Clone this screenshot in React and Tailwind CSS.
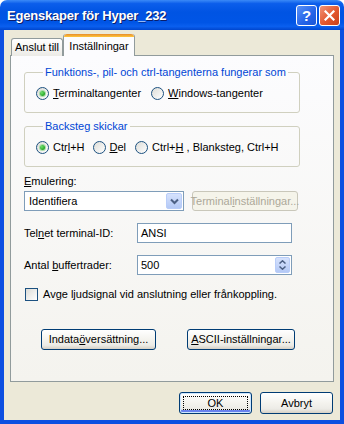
import React from "react";

function U({ children }) {
  return <span className="underline underline-offset-[1px]">{children}</span>;
}

function Radio({ checked, children, className = "" }) {
  return (
    <label className={`flex items-center ${className}`}>
      <span className="flex h-[13px] w-[13px] shrink-0 items-center justify-center rounded-full border border-[#1C5180] bg-[linear-gradient(135deg,#DCDCD7,#FFFFFF)]">
        {checked && (
          <span className="h-[5px] w-[5px] rounded-full bg-[radial-gradient(circle_at_35%_35%,#6EE06E,#21A121_75%)] shadow-[0_0_0_1px_#A8DDA8]" />
        )}
      </span>
      <span className="ml-[4px] whitespace-nowrap">{children}</span>
    </label>
  );
}

function GroupBox({ title, children, className = "" }) {
  return (
    <fieldset className={`w-[276px] rounded-[3px] border border-[#D0D0BF] pl-[11px] pt-[8px] pb-[12px] ${className}`}>
      <legend className="ml-[7px] px-[2px] text-[#0046D5]">{title}</legend>
      <div className="flex h-[13px] items-center">{children}</div>
    </fieldset>
  );
}

function XpButton({ children, className = "", isDefault }) {
  return (
    <button
      className={`flex h-[21px] items-center justify-center rounded-[3px] border border-[#003C74] bg-[linear-gradient(180deg,#FFFFFF_0%,#F4F3EE_50%,#ECEBE6_80%,#D6D0C5_100%)] text-[11px] leading-[13px] ${
        isDefault ? "p-[3px] shadow-[inset_0_0_0_1px_#CEE7FF,inset_0_-2px_0_1px_#6982EE]" : ""
      } ${className}`}
    >
      {isDefault ? (
        <span className="flex h-full w-full items-center justify-center border border-dotted border-black">
          {children}
        </span>
      ) : (
        children
      )}
    </button>
  );
}

export default function App() {
  return (
    <div className="flex h-[424px] w-[344px] flex-col overflow-hidden rounded-t-[7px] bg-white font-['Liberation_Sans',Arial,sans-serif] text-[11px] leading-[13px] text-black">
      {/* Title bar */}
      <div className="flex h-[30px] shrink-0 items-center pl-[7px] pr-[4px] bg-[linear-gradient(180deg,#3B8AF7_0%,#0C5EEB_12%,#0054E3_40%,#0055E6_75%,#0A5FEF_88%,#0046CE_100%)]">
        <span className="text-[13px] font-bold tracking-[-0.2px] text-white [text-shadow:1px_1px_0_#0A1E6A]">
          Egenskaper för Hyper_232
        </span>
        <div className="ml-auto flex gap-[2px]">
          <div className="flex h-[21px] w-[21px] items-center justify-center rounded-[3px] border border-white bg-[linear-gradient(135deg,#5A92F7,#2463E8_60%,#1A55D6)] text-[15px] font-bold text-white">
            ?
          </div>
          <div className="flex h-[21px] w-[21px] items-center justify-center rounded-[3px] border border-white bg-[linear-gradient(135deg,#F19479,#E2572E_55%,#C9411B)]">
            <svg width="11" height="11" viewBox="0 0 11 11">
              <path d="M1.5 1.5 L9.5 9.5 M9.5 1.5 L1.5 9.5" stroke="white" strokeWidth="2.2" strokeLinecap="square" />
            </svg>
          </div>
        </div>
      </div>

      {/* Body */}
      <div className="flex flex-1 flex-col border-x-4 border-b-4 border-[#0D4FE1] bg-[#ECE9D8] pt-[4px]">
        {/* Tabs */}
        <div className="relative z-10 -mb-px flex h-[22px] items-end pl-[7px]">
          <div className="flex h-[18px] w-[52px] items-center justify-center rounded-t-[3px] border border-b-0 border-[#919B9C] bg-[linear-gradient(180deg,#FFFFFF,#ECEBE6)]">
            Anslut till
          </div>
          <div className="flex h-[22px] w-[72px] flex-col rounded-t-[3px] border-x border-[#919B9C] bg-[#FCFCFE]">
            <div className="h-[3px] rounded-t-[3px] bg-[linear-gradient(180deg,#E68B2C,#FFC83C)]" />
            <div className="flex flex-1 items-center justify-center pb-[1px]">Inställningar</div>
          </div>
        </div>

        {/* Panel */}
        <div className="ml-[6px] flex h-[327px] w-[324px] flex-col border border-[#919B9C] bg-[linear-gradient(180deg,#FCFCFE,#F4F3EE)] pl-[13px] pt-[10px]">
          <GroupBox title="Funktions-, pil- och ctrl-tangenterna fungerar som">
            <Radio checked>
              <U>T</U>erminaltangenter
            </Radio>
            <Radio className="ml-[10px]">
              <U>W</U>indows-tangenter
            </Radio>
          </GroupBox>

          <GroupBox title="Backsteg skickar" className="mt-[7px]">
            <Radio checked>
              Ctr<U>l</U>+H
            </Radio>
            <Radio className="ml-[8px]">
              <U>D</U>el
            </Radio>
            <Radio className="ml-[9px]">
              Ctrl+<U>H</U> , Blanksteg, Ctrl+H
            </Radio>
          </GroupBox>

          <div className="mt-[8px]">
            <U>E</U>mulering:
          </div>
          <div className="mt-[3px] flex h-[20px] items-center">
            <div className="flex h-full w-[160px] items-center border border-[#7F9DB9] bg-white">
              <span className="flex-1 pl-[4px]">Identifiera</span>
              <span className="mr-px flex h-[16px] w-[16px] items-center justify-center rounded-[2px] border border-[#B9CDF9] bg-[linear-gradient(180deg,#D6E2FD,#B4C9F6)]">
                <svg width="9" height="7" viewBox="0 0 9 7">
                  <path d="M1 1.5 L4.5 5 L8 1.5" fill="none" stroke="#4D6185" strokeWidth="2" />
                </svg>
              </span>
            </div>
            <div className="ml-[8px] flex h-full w-[106px] items-center justify-center rounded-[3px] border border-[#C9C7BA] bg-[#F5F4EA] text-[#ACA899]">
              Terminal<U>i</U>nställningar...
            </div>
          </div>

          <div className="mt-[12px] flex h-[20px] items-center">
            <span className="w-[113px]">
              Tel<U>n</U>et terminal-ID:
            </span>
            <div className="flex h-full w-[155px] items-center border border-[#7F9DB9] bg-white pl-[3px]">ANSI</div>
          </div>

          <div className="mt-[12px] flex h-[20px] items-center">
            <span className="w-[113px]">
              Antal <U>b</U>uffertrader:
            </span>
            <div className="flex h-full w-[155px] items-center border border-[#7F9DB9] bg-white pl-[3px]">
              <span className="flex-1">500</span>
              <span className="mr-px flex h-[16px] w-[15px] flex-col items-center justify-center gap-[2px] rounded-[2px] border border-[#B9CDF9] bg-[linear-gradient(180deg,#D6E2FD,#B4C9F6)]">
                <svg width="7" height="4" viewBox="0 0 7 4">
                  <path d="M0.5 3.5 L3.5 0.8 L6.5 3.5" fill="none" stroke="#4D6185" strokeWidth="1.5" />
                </svg>
                <svg width="7" height="4" viewBox="0 0 7 4">
                  <path d="M0.5 0.5 L3.5 3.2 L6.5 0.5" fill="none" stroke="#4D6185" strokeWidth="1.5" />
                </svg>
              </span>
            </div>
          </div>

          <label className="mt-[13px] flex h-[13px] items-center pl-px">
            <span className="h-[13px] w-[13px] border border-[#1C5180] bg-[linear-gradient(135deg,#DCDCD7,#FFFFFF)]" />
            <span className="ml-[5px]">Avge ljudsignal vid anslutning eller frånkoppling.</span>
          </label>

          <div className="mt-[28px] flex pl-[17px]">
            <XpButton className="w-[115px]">
              Indata<U>ö</U>versättning...
            </XpButton>
            <XpButton className="ml-[31px] w-[108px]">
              <U>A</U>SCII-inställningar...
            </XpButton>
          </div>
        </div>

        {/* Dialog buttons */}
        <div className="mt-[10px] flex justify-end gap-[8px] pr-[7px]">
          <XpButton isDefault className="h-[22px] w-[73px]">
            OK
          </XpButton>
          <XpButton className="h-[22px] w-[73px]">Avbryt</XpButton>
        </div>
      </div>
    </div>
  );
}
